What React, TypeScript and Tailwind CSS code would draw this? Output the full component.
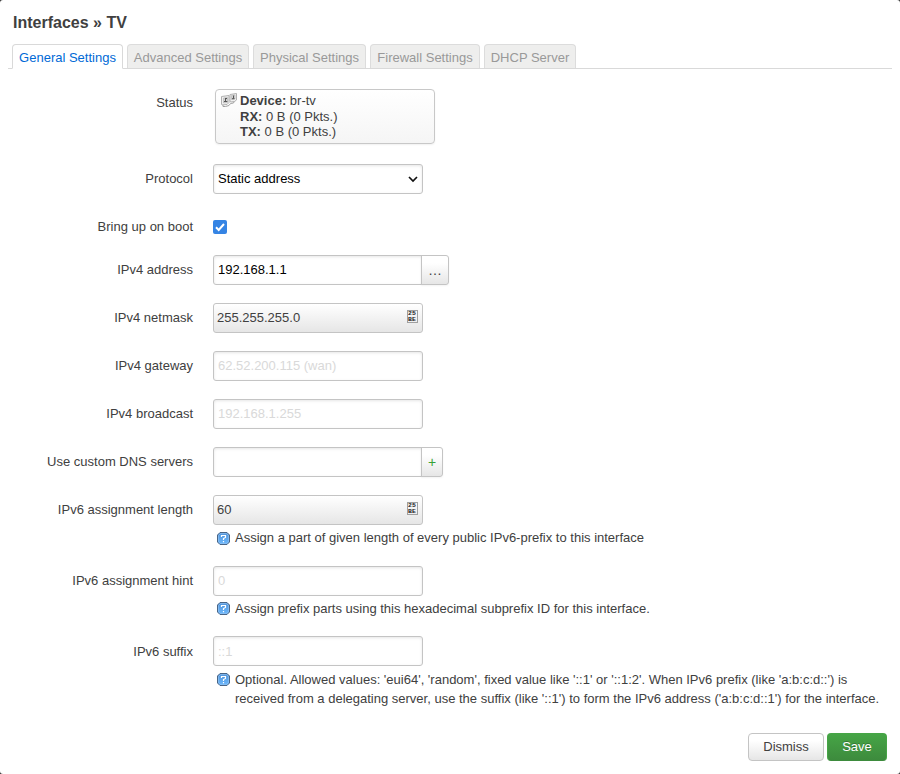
import React from 'react';

const field =
  'block h-[30px] w-[210px] rounded-[3px] border border-[#c4c4c4] bg-white px-1 pb-[2px] text-[13px] text-black shadow-[inset_0_1px_3px_rgba(0,0,0,0.1)] outline-none placeholder:text-[#d9d9d9]';
const shade = 'bg-linear-to-b from-white from-25% to-[#e6e6e6]';

function Row({ label, height, pad = 'pt-[6px]', children }: { label: string; height: string; pad?: string; children: React.ReactNode }) {
  return (
    <div className={`flex ${height}`}>
      <div className={`w-[193px] shrink-0 ${pad} text-right leading-[18px]`}>{label}</div>
      <div className="ml-5 min-w-0 flex-1">{children}</div>
    </div>
  );
}

function HexGlyph() {
  return (
    <span className="mt-px flex h-[13px] w-[11px] flex-col items-center justify-center border border-[#a0a0a0] font-['Liberation_Mono',monospace] text-[5px] leading-[6px] font-bold text-[#222]">
      <span className="h-[6px] scale-x-130">25</span>
      <span className="h-[6px] scale-x-130">BE</span>
    </span>
  );
}

function Dropdown({ value }: { value: string }) {
  return (
    <div className="flex h-[30px] w-[210px] items-start justify-between rounded-[3px] border border-[#c4c4c4] bg-linear-to-b from-white to-[#e6e6e6] pt-[5px] pr-1 pl-[3px]">
      <span className="leading-[18px]">{value}</span>
      <HexGlyph />
    </div>
  );
}

function HelpIcon({ offset = 'mt-[4px]' }: { offset?: string }) {
  return (
    <svg className={`${offset} mr-[5px] ml-1 shrink-0`} width="13" height="13" viewBox="0 0 13 13" fill="none">
      <defs>
        <linearGradient id="helpFill" x1="0" y1="0" x2="0" y2="1">
          <stop stopColor="#4f90d6" />
          <stop offset="1" stopColor="#6dbaff" />
        </linearGradient>
      </defs>
      <path d="M3 .5h7L12.500 3v7L10 12.500H3L.5 10V3z" fill="url(#helpFill)" stroke="#4a6585" />
      <path d="M3.500 1.500h6L11.500 3.500v6l-2 2h-6l-2-2v-6z" stroke="#8fc1f2" strokeWidth=".7" />
      <path d="M4.500 5V3.500h4v2L6.500 6.500V8M6.500 9v1.300" stroke="#fff" strokeWidth="1.200" />
    </svg>
  );
}

function Help({ offset, children }: { offset?: string; children: React.ReactNode }) {
  return (
    <div className="flex pt-[3px] leading-[19px] whitespace-nowrap">
      <HelpIcon offset={offset} />
      <div>{children}</div>
    </div>
  );
}

function BridgeIcon() {
  return (
    <svg width="16" height="16" viewBox="0 0 16 16" fill="none">
      <path d="M2 11v2.500h2.500L8 12.500l1.500-2 3-.5 1-2" stroke="#a0a0a0" />
      <path d="M.5 3.500 8 2.500v7L6 11.500l-5 .5-.5-1z" fill="#f0f0f0" stroke="#b0b0b0" />
      <path d="M9 1.500 15.500.500V7l-2 1.500-4 .5L9 8z" fill="#f0f0f0" stroke="#b0b0b0" />
      <path d="M2.500 5 6.500 4.500v5l-4 .5z" fill="#d4d4d4" stroke="#b0b0b0" strokeWidth=".6" />
      <path d="m10.500 2.500 3.500-.5V6l-3.500.5z" fill="#d4d4d4" stroke="#b0b0b0" strokeWidth=".6" />
      <path d="M3 8.500h3.300M4.500 5v3.500M4 5.500h2M11 5.700h2.500M12.500 2.500v3" stroke="#555" />
    </svg>
  );
}

const tabs = [
  { name: 'General Settings', width: 'w-[111px]' },
  { name: 'Advanced Settings', width: 'w-[122px]' },
  { name: 'Physical Settings', width: 'w-[113px]' },
  { name: 'Firewall Settings', width: 'w-[110px]' },
  { name: 'DHCP Server', width: 'w-[92px]' },
];

export default function App() {
  return (
    <div className="bg-[#333] font-['Liberation_Sans',Arial,sans-serif] text-[13px] text-[#404040]">
      <div className="flex h-[774px] w-[900px] flex-col overflow-hidden rounded-[3px] bg-white opacity-[0.999]">
        <h4 className="h-11 pt-3 pl-[13px] text-[16px] leading-[21px] font-bold">Interfaces » TV</h4>
        <ul className="mx-2 flex h-[25px] gap-1 border-b border-[#d9d9d9] pl-1">
          {tabs.map((tab, i) => (
            <li
              key={tab.name}
              className={`${tab.width} rounded-t-[4px] border text-center leading-[26px] whitespace-nowrap ${
                i === 0
                  ? 'h-[25px] border-[#d9d9d9] border-b-white bg-white text-[#0069d6]'
                  : 'h-6 border-b-0 border-[#dcdcdc] bg-[#eeeeed] text-[#999]'
              }`}
            >
              {tab.name}
            </li>
          ))}
        </ul>

        <div className="pt-5">
          <Row label="Status" height="h-[75px]" pad="pt-[5px]">
            <div className="ml-[2px] flex h-[55px] w-[220px] rounded-[4px] border border-[#c8c8c8] bg-linear-to-b from-white to-[#f5f5f5] pt-[3px] pl-[5px] shadow-[0_1px_2px_rgba(0,0,0,0.06)]">
              <BridgeIcon />
              <div className="ml-[3px] leading-[15.6px]">
                <div><b>Device:</b> br-tv</div>
                <div><b>RX:</b> 0 B (0 Pkts.)</div>
                <div><b>TX:</b> 0 B (0 Pkts.)</div>
              </div>
            </div>
          </Row>
          <Row label="Protocol" height="h-12">
            <div className={`${field} flex items-center justify-between`}>
              <span className="pt-[2px]">Static address</span>
              <svg className="mt-[2px]" width="10" height="8" viewBox="0 0 10 8" fill="none">
                <path d="m1 2 4 4 4-4" stroke="#111" strokeWidth="1.700" />
              </svg>
            </div>
          </Row>
          <Row label="Bring up on boot" height="h-[43px]">
            <span className="mt-2 flex h-[14px] w-[14px] items-center justify-center rounded-[2px] bg-[#3584e4]" role="checkbox" aria-checked="true">
              <svg width="12" height="12" viewBox="0 0 12 12" fill="none">
                <path d="m2 6.300 2.700 2.700L10 3" stroke="#fff" strokeWidth="2" />
              </svg>
            </span>
          </Row>
          <Row label="IPv4 address" height="h-12">
            <div className="flex">
              <input className={`${field} rounded-r-none`} defaultValue="192.168.1.1" />
              <button className={`-ml-[2px] h-[30px] w-7 rounded-r-[3px] border border-[#c4c4c4] text-[14px] shadow-[0_1px_2px_rgba(0,0,0,0.05)] ${shade}`}>…</button>
            </div>
          </Row>
          <Row label="IPv4 netmask" height="h-12"><Dropdown value="255.255.255.0" /></Row>
          <Row label="IPv4 gateway" height="h-12"><input className={field} placeholder="62.52.200.115 (wan)" /></Row>
          <Row label="IPv4 broadcast" height="h-12"><input className={field} placeholder="192.168.1.255" /></Row>
          <Row label="Use custom DNS servers" height="h-12">
            <div className="flex">
              <input className={`${field} rounded-r-none`} />
              <button className={`-ml-[2px] h-[30px] w-[22px] rounded-r-[3px] border border-[#c4c4c4] text-[14px] text-[#37a237] shadow-[0_1px_2px_rgba(0,0,0,0.05)] ${shade}`}>+</button>
            </div>
          </Row>
          <Row label="IPv6 assignment length" height="h-[71px]">
            <Dropdown value="60" />
            <Help>Assign a part of given length of every public IPv6-prefix to this interface</Help>
          </Row>
          <Row label="IPv6 assignment hint" height="h-[70px]">
            <input className={field} placeholder="0" />
            <Help offset="mt-[3px]">Assign prefix parts using this hexadecimal subprefix ID for this interface.</Help>
          </Row>
          <Row label="IPv6 suffix" height="h-[97px]" pad="pt-[7px]">
            <input className={`${field} pt-[2px]`} placeholder="::1" />
            <div className="pt-px">
              <Help offset="mt-[3px]">
                Optional. Allowed values: 'eui64', 'random', fixed value like '::1' or '::1:2'. When IPv6 prefix (like 'a:b:c:d::') is<br />
                received from a delegating server, use the suffix (like '::1') to form the IPv6 address ('a:b:c:d::1') for the interface.
              </Help>
            </div>
          </Row>
        </div>

        <div className="flex justify-end gap-[3px] pr-[13px]">
          <button className={`h-7 w-[76px] rounded-[4px] border border-[#c4c4c4] ${shade}`}>Dismiss</button>
          <button className="h-7 w-[60px] rounded-[4px] border border-[#46a546] border-b-[#3d8b3d] bg-linear-to-b from-[#46a546] to-[#3d8b3d] text-white [text-shadow:0_-1px_0_rgba(0,0,0,0.25)]">Save</button>
        </div>
      </div>
    </div>
  );
}
